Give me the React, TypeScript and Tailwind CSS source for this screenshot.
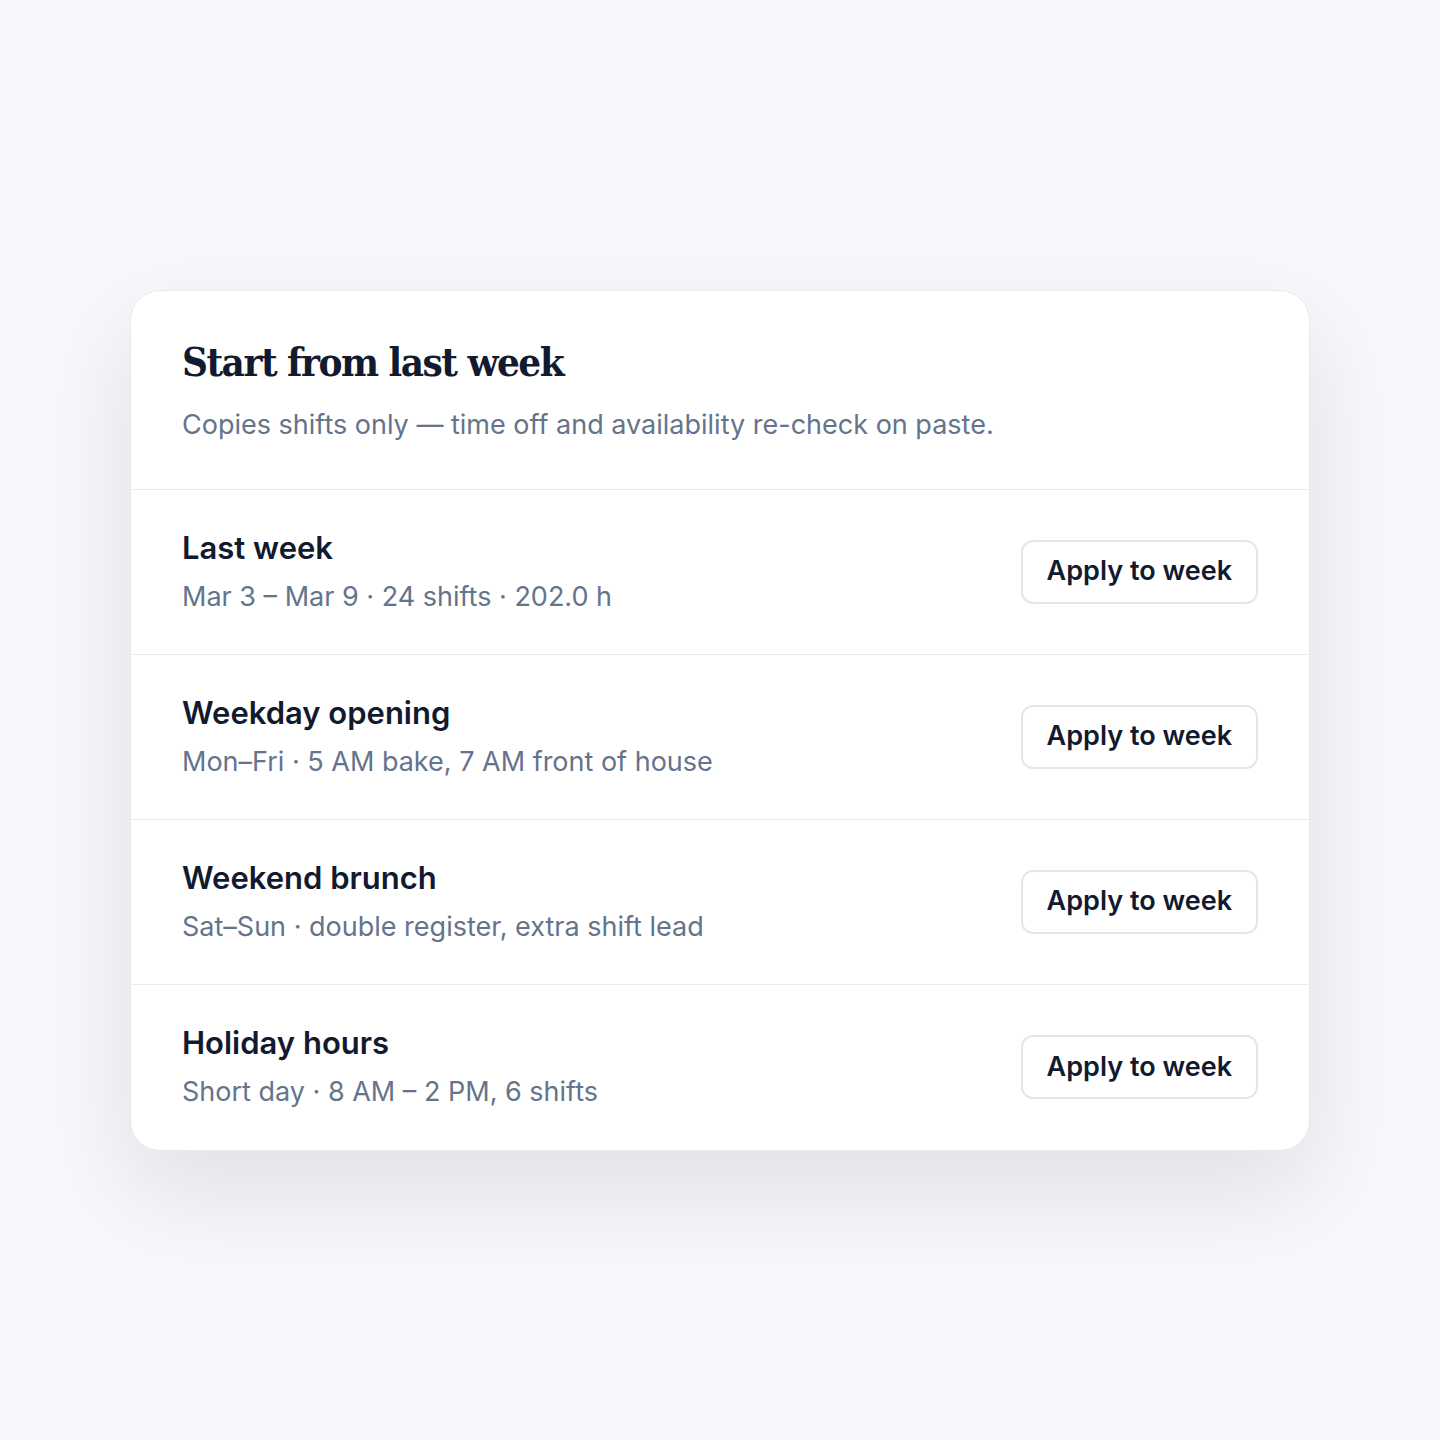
const templates = [
  { name: 'Last week', detail: 'Mar 3 – Mar 9 · 24 shifts · 202.0 h' },
  { name: 'Weekday opening', detail: 'Mon–Fri · 5 AM bake, 7 AM front of house' },
  { name: 'Weekend brunch', detail: 'Sat–Sun · double register, extra shift lead' },
  { name: 'Holiday hours', detail: 'Short day · 8 AM – 2 PM, 6 shifts' },
]

export default function App() {
  return (
    <div className="min-h-[1440px] w-full bg-[#f6f8fb] flex items-center justify-center font-['Inter',sans-serif]">
      <div className="w-[1180px] bg-white rounded-[30px] border border-[#e6e9ee] shadow-[0_40px_100px_rgba(15,23,42,0.10)] overflow-hidden">
        <div className="px-[51px] pt-[47px] pb-[46px] border-b border-[#e8ebf0]">
          <h2 className="font-['DejaVu_Serif_Condensed','DejaVu_Serif',serif] font-bold text-[40px] leading-[48px] tracking-[-1.5px] text-[#111a2e]">
            Start from last week
          </h2>
          <p className="mt-[21px] text-[27px] leading-[36px] text-[#64748b]">
            Copies shifts only — time off and availability re-check on paste.
          </p>
        </div>
        {templates.map((t, i) => (
          <div
            key={t.name}
            className={`flex items-center justify-between px-[51px] h-[165px] ${i < templates.length - 1 ? 'border-b border-[#e8ebf0]' : ''}`}
          >
            <div className="flex flex-col gap-[12px]">
              <div className="text-[31px] leading-[38px] font-semibold text-[#111a2e]">{t.name}</div>
              <div className="text-[27px] leading-[36px] text-[#64748b]">{t.detail}</div>
            </div>
            <button className="h-[64px] px-[24px] rounded-[12px] border-2 border-[#e3e7ed] bg-white text-[27px] font-semibold text-[#111a2e]">
              Apply to week
            </button>
          </div>
        ))}
      </div>
    </div>
  )
}
